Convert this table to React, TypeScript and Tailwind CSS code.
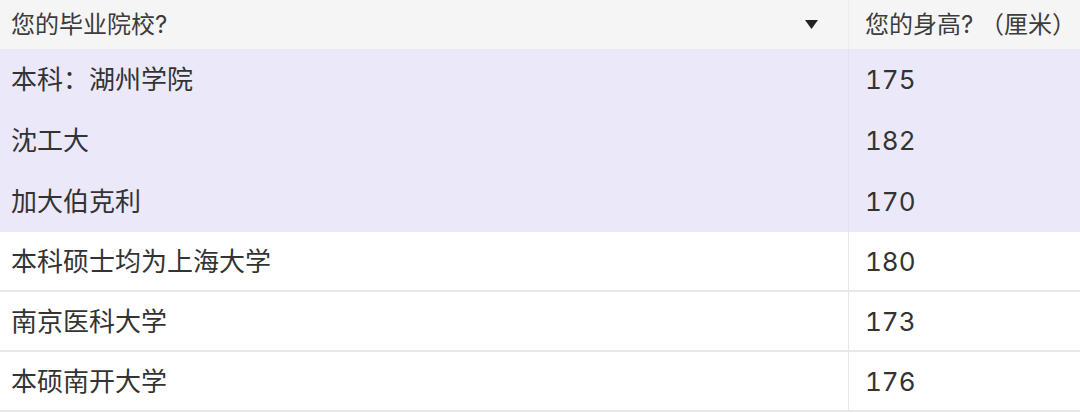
const rows = [
  { school: "本科：湖州学院", height: "175", picked: true },
  { school: "沈工大", height: "182", picked: true },
  { school: "加大伯克利", height: "170", picked: true },
  { school: "本科硕士均为上海大学", height: "180", picked: false },
  { school: "南京医科大学", height: "173", picked: false },
  { school: "本硕南开大学", height: "176", picked: false },
];

export default function App() {
  return (
    <div
      className="w-[1080px] h-[413px] overflow-hidden bg-white text-[#333]"
      style={{ fontFamily: 'Inter, "Noto Sans CJK SC", sans-serif' }}
    >
      <div className="grid h-[49px] grid-cols-[849px_1fr] bg-[#f5f5f5] text-[24px] text-[#3c3c3c]">
        <div className="flex items-center justify-between border-r border-[#ececec] pl-[11px] pr-[30px]">
          <span>您的毕业院校?</span>
          <svg width="13" height="9" viewBox="0 0 13 9">
            <path d="M0 0h13L6.5 9z" fill="#222" />
          </svg>
        </div>
        <div className="flex items-center whitespace-nowrap pl-[16px]">您的身高? （厘米）</div>
      </div>
      {rows.map((r) => (
        <div
          key={r.school}
          className={
            r.picked
              ? "grid h-[61px] grid-cols-[849px_1fr] bg-[#ebe8f9] text-[26px]"
              : "grid h-[60px] grid-cols-[849px_1fr] border-b-2 border-[#e8e8e8] bg-white text-[26px]"
          }
        >
          <div
            className={
              r.picked
                ? "flex items-center border-r border-[#e4e1f3] pl-[11px]"
                : "flex items-center border-r border-[#e8e8e8] pl-[11px]"
            }
          >
            {r.school}
          </div>
          <div className="flex items-center pl-[16px] tabular-nums">{r.height}</div>
        </div>
      ))}
    </div>
  );
}
